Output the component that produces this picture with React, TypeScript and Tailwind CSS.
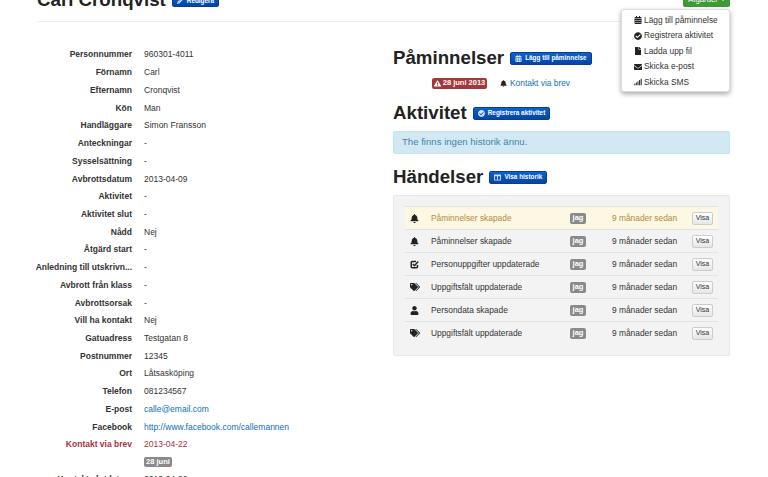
import React from "react";
import { FaBell, FaTags, FaUser, FaFile, FaEnvelope, FaCalendarAlt, FaCheckCircle, FaExclamationTriangle, FaPencilAlt, FaColumns, FaSignal } from "react-icons/fa";

const rows: [string, string, string?][] = [
  ["Personnummer", "960301-4011"],
  ["Förnamn", "Carl"],
  ["Efternamn", "Cronqvist"],
  ["Kön", "Man"],
  ["Handläggare", "Simon Fransson"],
  ["Anteckningar", "-"],
  ["Sysselsättning", "-"],
  ["Avbrottsdatum", "2013-04-09"],
  ["Aktivitet", "-"],
  ["Aktivitet slut", "-"],
  ["Nådd", "Nej"],
  ["Åtgärd start", "-"],
  ["Anledning till utskrivn...", "-"],
  ["Avbrott från klass", "-"],
  ["Avbrottsorsak", "-"],
  ["Vill ha kontakt", "Nej"],
  ["Gatuadress", "Testgatan 8"],
  ["Postnummer", "12345"],
  ["Ort", "Låtsasköping"],
  ["Telefon", "081234567"],
  ["E-post", "calle@email.com", "link"],
  ["Facebook", "http://www.facebook.com/callemannen", "link"],
  ["Kontakt via brev", "2013-04-22", "red"],
];

const menu: [React.ReactNode, string][] = [
  [<FaCalendarAlt />, "Lägg till påminnelse"],
  [<FaCheckCircle />, "Registrera aktivitet"],
  [<FaFile />, "Ladda upp fil"],
  [<FaEnvelope />, "Skicka e-post"],
  [<FaSignal />, "Skicka SMS"],
];

function CheckIcon() {
  return (
    <svg width="9" height="9" viewBox="0 0 18 18" fill="none" stroke="currentColor" strokeWidth="3">
      <path d="M12 3H4.5A2 2 0 0 0 2.5 5v8.5a2 2 0 0 0 2 2H13a2 2 0 0 0 2-2V10" />
      <path d="M5.5 8l3.5 3.5L16.5 3" />
    </svg>
  );
}

const events: [React.ReactNode, string][] = [
  [<FaBell />, "Påminnelser skapade"],
  [<FaBell />, "Påminnelser skapade"],
  [<CheckIcon />, "Personuppgifter uppdaterade"],
  [<FaTags className="text-[10px]" />, "Uppgiftsfält uppdaterade"],
  [<FaUser />, "Persondata skapade"],
  [<FaTags className="text-[10px]" />, "Uppgiftsfält uppdaterade"],
];

function BlueBtn({ icon, text }: { icon: React.ReactNode; text: string }) {
  return (
    <span className="inline-flex h-[13px] items-center gap-[3px] whitespace-nowrap rounded-[2px] border border-[#04408f] bg-gradient-to-b from-[#0a63d0] to-[#0544a8] px-[4px] text-[6.4px] font-bold text-white">
      <span className="text-[7px] text-[#d5e2f5]">{icon}</span>
      {text}
    </span>
  );
}

function Field({ label, value, kind }: { label: string; value: string; kind?: string }) {
  return (
    <div className={`flex h-[17.73px] items-center whitespace-nowrap ${kind === "red" ? "text-[#a5343a]" : "text-[#333333]"}`}>
      <div className="flex w-[95px] justify-end font-bold">{label}</div>
      <div className={`ml-3 ${kind === "link" ? "text-[#0f6fb8]" : ""}`}>{value}</div>
    </div>
  );
}

export default function App() {
  return (
    <div className="h-[477px] w-[768px] overflow-hidden bg-white font-['Liberation_Sans',Arial,sans-serif] text-[8.5px] text-[#333333]">
      <div className="ml-[37px] w-[693px]">
        <header className="relative -mt-[7px] flex h-[29px] items-start gap-[6px] border-b border-[#eeeeee]">
          <h1 className="-mt-[3px] text-[18.7px] font-bold leading-[20px] text-[#222222]">Carl Cronqvist</h1>
          <div className="mt-[1px]">
            <BlueBtn icon={<FaPencilAlt />} text="Redigera" />
          </div>
          <span className="absolute right-0 top-0 flex h-[14px] w-[47px] items-center justify-center gap-[3px] rounded-b-[2px] bg-[#3f9a35] text-[7.8px] text-white">
            Åtgärder
            <span className="h-0 w-0 border-x-[2px] border-t-[2px] border-x-transparent border-t-white" />
          </span>
          <div className="absolute right-0 top-[16px] z-10 flex h-[83px] w-[109px] flex-col justify-center rounded-[3px] border border-[#dddddd] bg-white pl-[12px] pt-[1px] text-[8.35px] shadow-[0_2px_5px_rgba(0,0,0,0.35)]">
            {menu.map(([icon, text]) => (
              <div key={text} className="flex h-[15.5px] items-center gap-[2px] text-[#333333]">
                <span className="flex w-[8px] justify-center text-[8px] text-[#222222]">{icon}</span>
                {text}
              </div>
            ))}
          </div>
        </header>
        <main className="flex">
          <section className="mt-[24px] w-[356px]">
            {rows.map(([l, v, k]) => (
              <Field key={l} label={l} value={v} kind={k} />
            ))}
            <div className="ml-[107px] mt-[3px] flex h-[10px] w-[28px] items-center justify-center rounded-[2px] bg-[#8a8a8a] text-[7.5px] font-bold text-white">
              28 juni
            </div>
            <div className="mt-[4px]">
              <Field label="Kontakt slutdatum" value="2013-04-22" />
            </div>
          </section>
          <section className="mt-[24px] w-[337px]">
            <div className="flex h-[24px] items-center gap-[6px]">
              <h2 className="text-[18.7px] font-bold text-[#222222]">Påminnelser</h2>
              <BlueBtn icon={<FaCalendarAlt />} text="Lägg till påminnelse" />
            </div>
            <div className="ml-[39px] mt-[6px] flex h-[14px] items-center text-[8.4px]">
              <span className="flex h-[11px] w-[55px] items-center justify-center gap-[2px] rounded-[2px] bg-[#a8353a] text-[7.5px] font-bold text-white">
                <FaExclamationTriangle className="text-[7px]" />
                28 juni 2013
              </span>
              <FaBell className="ml-[13px] text-[7px] text-[#222222]" />
              <span className="ml-[3px] text-[#0f6fb8]">Kontakt via brev</span>
            </div>
            <div className="mt-[11px] flex h-[24px] items-center gap-[6px]">
              <h2 className="text-[18.7px] font-bold text-[#222222]">Aktivitet</h2>
              <BlueBtn icon={<FaCheckCircle />} text="Registrera aktivitet" />
            </div>
            <div className="mt-[6px] flex h-[23px] items-center rounded-[2px] border border-[#bce8f1] bg-[#d2e9f3] px-[8px] text-[9.6px] text-[#3a87ad]">
              The finns ingen historik ännu.
            </div>
            <div className="mt-[11px] flex h-[24px] items-center gap-[6px]">
              <h2 className="text-[18.7px] font-bold text-[#222222]">Händelser</h2>
              <BlueBtn icon={<FaColumns />} text="Visa historik" />
            </div>
            <div className="mt-[6px] h-[161px] rounded-[2px] border border-[#e8e8e8] bg-[#f3f3f3] pl-[11px] pr-[11px] pt-[10px] text-[8.4px]">
              {events.map(([icon, text], i) => (
                <div
                  key={i}
                  className={`flex h-[23px] items-center border-t border-[#e2e2e2] ${i === 0 ? "bg-[#fcf8e3] text-[#b5893f]" : "text-[#333333]"}`}
                >
                  <span className="mr-[7px] flex w-[19px] justify-center text-[9px] text-[#222222]">{icon}</span>
                  <span className="w-[139px]">{text}</span>
                  <span className="flex h-[11px] w-[16px] items-center justify-center rounded-[2px] bg-[#8a8a8a] text-[7.5px] font-bold text-white">jag</span>
                  <span className="ml-[26px] w-[80px]">9 månader sedan</span>
                  <span className="flex h-[13px] w-[21px] items-center justify-center rounded-[2px] border border-[#cccccc] bg-gradient-to-b from-white to-[#e6e6e6] text-[7px] text-[#333333]">Visa</span>
                </div>
              ))}
            </div>
          </section>
        </main>
      </div>
    </div>
  );
}
